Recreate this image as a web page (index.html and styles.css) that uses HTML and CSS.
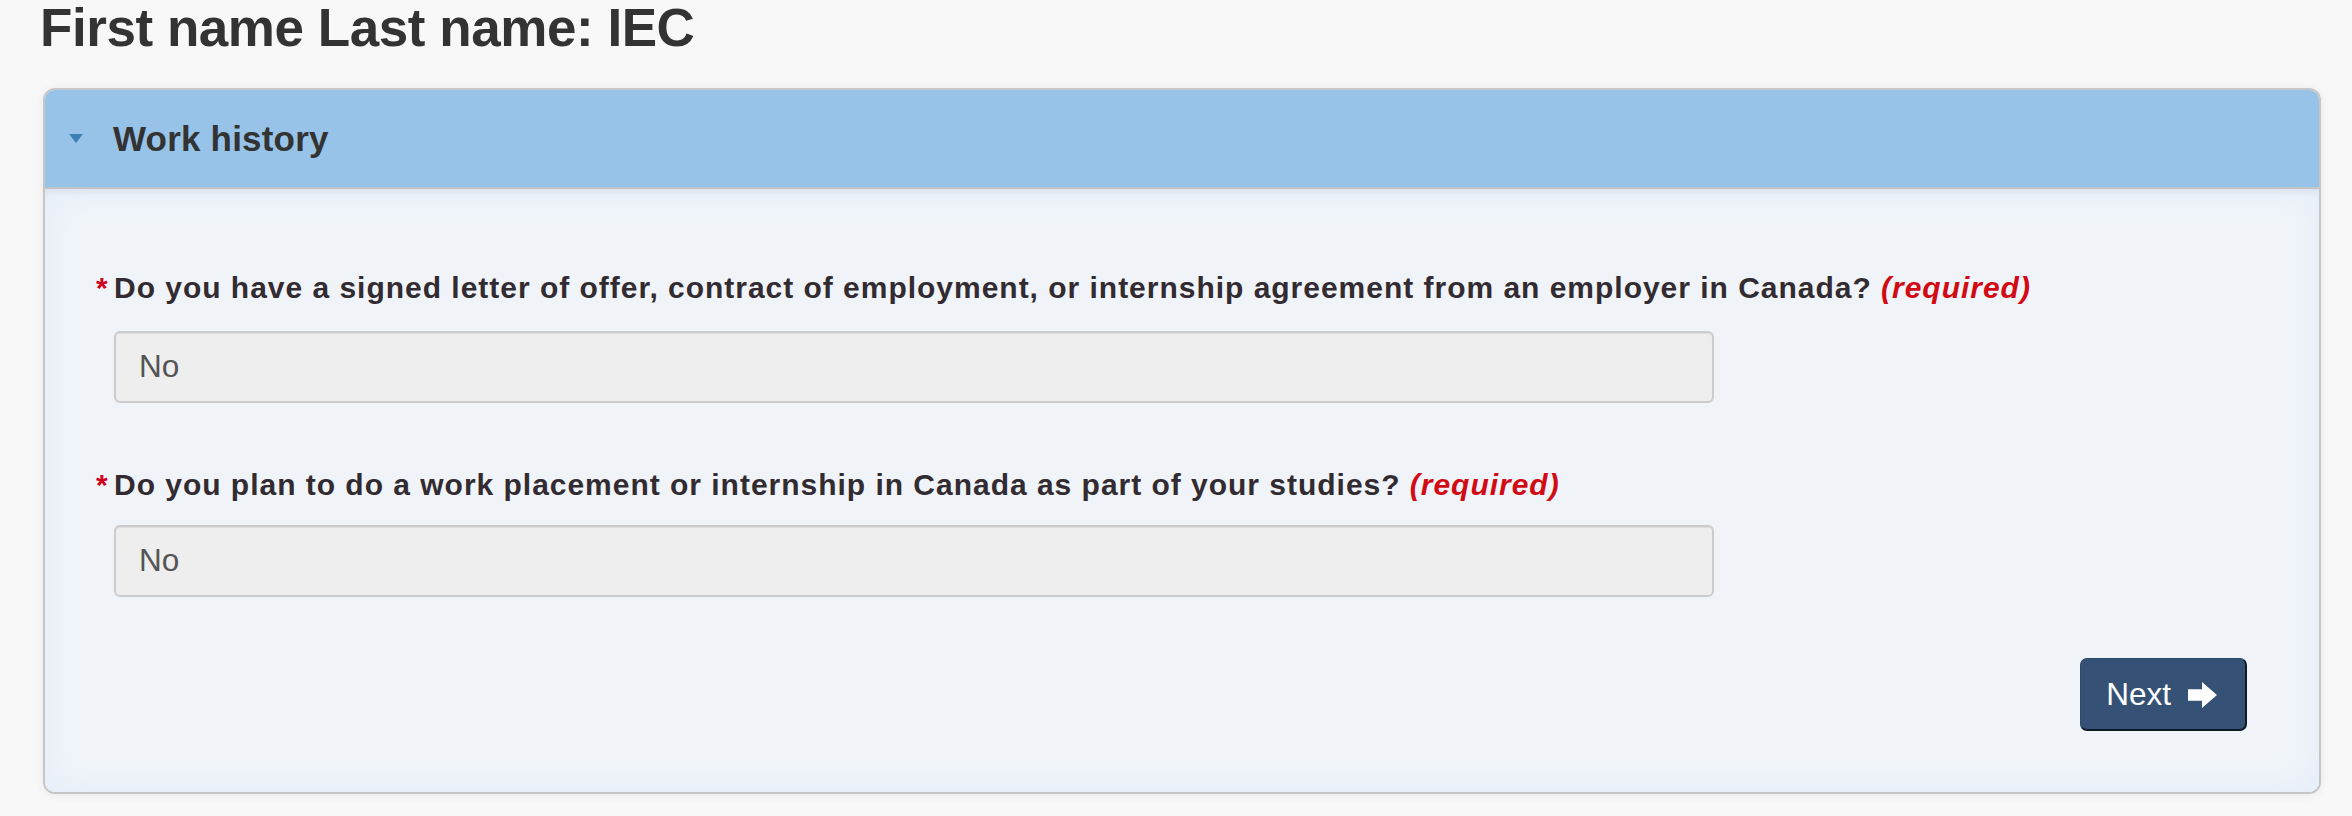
FILE: index.html
```html
<!DOCTYPE html>
<html lang="en">
<head>
<meta charset="utf-8">
<title>First name Last name: IEC</title>
<link rel="stylesheet" href="styles.css">
</head>
<body>
<div class="page">
  <h1 class="title">First name Last name: IEC</h1>
  <section class="panel">
    <div class="panel-head">
      <span class="caret"></span>
      <h2 class="panel-title">Work history</h2>
    </div>
    <div class="panel-body">
      <div class="field">
        <label class="question"><span class="star">*</span>Do you have a signed letter of offer, contract of employment, or internship agreement from an employer in Canada? <em class="req">(required)</em></label>
        <div class="answer">No</div>
      </div>
      <div class="field field-second">
        <label class="question"><span class="star">*</span>Do you plan to do a work placement or internship in Canada as part of your studies? <em class="req">(required)</em></label>
        <div class="answer">No</div>
      </div>
      <div class="actions">
        <button class="next" type="button">Next
          <svg class="arrow" viewBox="0 0 29 26" width="29" height="26" aria-hidden="true"><path d="M0 7.2H14V0L29 13L14 26V18.8H0Z" fill="#ffffff"/></svg>
        </button>
      </div>
    </div>
  </section>
</div>
</body>
</html>
```

FILE: styles.css
```css
* { box-sizing: border-box; }

body {
  margin: 0;
  background: #f8f8f8;
  font-family: "Liberation Sans", Arial, Helvetica, sans-serif;
  color: #333333;
}

.page {
  padding: 0 31px 22px 43px;
}

.title {
  margin: 0 0 0 -3px;
  font-size: 53px;
  line-height: 56px;
  font-weight: bold;
  letter-spacing: -0.45px;
  color: #333333;
}

.panel {
  margin-top: 32px;
  border: 2px solid #c6c6c6;
  border-radius: 12px;
  overflow: hidden;
  background: #f0f4f8;
  box-shadow: 0 1px 10px rgba(0, 0, 0, 0.07);
}

.panel-head {
  display: flex;
  align-items: center;
  height: 99px;
  padding-left: 24px;
  background: #96c3e7;
  border-bottom: 2px solid #c2c5c8;
}

.caret {
  width: 0;
  height: 0;
  border-left: 7.5px solid transparent;
  border-right: 7.5px solid transparent;
  border-top: 9px solid #3d80b6;
  margin-right: 30px;
  margin-top: -1px;
}

.panel-title {
  margin: 0;
  font-size: 35px;
  line-height: 40px;
  font-weight: bold;
  letter-spacing: 0.2px;
  color: #333333;
}

.panel-body {
  padding: 78px 72px 61px 69px;
  background: #f0f4f8;
  box-shadow: inset 0 7px 8px -5px rgba(0, 0, 0, 0.07), inset 0 0 30px 6px #e5eefa;
}

.field-second {
  margin-top: 61px;
}

.question {
  display: block;
  font-size: 30px;
  line-height: 42px;
  font-weight: bold;
  letter-spacing: 0.98px;
  color: #322b31;
}

.star {
  display: inline-block;
  width: 18px;
  margin-left: -18px;
  color: #d0021b;
}

.req {
  color: #d20a14;
  font-style: italic;
  font-weight: bold;
}

.answer {
  display: flex;
  align-items: center;
  width: 75%;
  height: 72px;
  margin-top: 22px;
  padding: 0 22px 3px 23px;
  background: #eeeeee;
  border: 2px solid #cccccc;
  border-radius: 6px;
  box-shadow: inset 0 1px 1px rgba(0, 0, 0, 0.075);
  font-size: 31.5px;
  line-height: 34px;
  color: #555555;
}

.field-second .answer {
  margin-top: 19px;
}

.actions {
  display: flex;
  justify-content: flex-end;
  margin-top: 61px;
}

.next {
  display: inline-flex;
  align-items: center;
  gap: 17px;
  height: 73px;
  padding: 0 28px 0 25px;
  background: #355276;
  color: #ffffff;
  font-family: "Liberation Sans", Arial, Helvetica, sans-serif;
  font-size: 31.5px;
  line-height: 36px;
  border-style: solid;
  border-width: 1px 2px 2px 1px;
  border-color: #2f4a6b #0f1a28 #0f1a28 #2f4a6b;
  border-radius: 7px;
  cursor: pointer;
}

.arrow {
  display: block;
  margin-top: 2px;
}
```
